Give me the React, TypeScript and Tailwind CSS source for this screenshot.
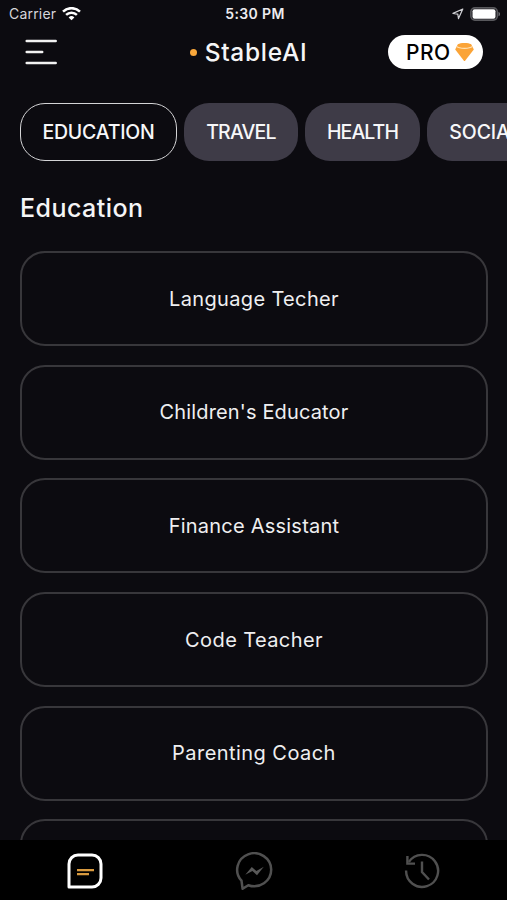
import { useState } from 'react';

interface Category {
  id: string;
  label: string;
  className: string;
}

interface Assistant {
  id: number;
  name: string;
  className: string;
}

const categories: Category[] = [
  { id: 'education', label: 'EDUCATION', className: 'w-[157px] tracking-[-0.2px]' },
  { id: 'travel', label: 'TRAVEL', className: 'w-[114px] tracking-[-0.8px]' },
  { id: 'health', label: 'HEALTH', className: 'w-[115px] tracking-[-0.9px]' },
  { id: 'social', label: 'SOCIAL', className: 'w-[116px] tracking-[-0.1px]' },
];

const assistants: Assistant[] = [
  { id: 1, name: 'Language Techer', className: 'tracking-[0.35px]' },
  { id: 2, name: "Children's Educator", className: 'tracking-[0.15px]' },
  { id: 3, name: 'Finance Assistant', className: 'tracking-[0.22px]' },
  { id: 4, name: 'Code Teacher', className: 'tracking-[0.4px]' },
  { id: 5, name: 'Parenting Coach', className: 'tracking-[0.45px]' },
  { id: 6, name: '', className: '' },
];

function StatusBar() {
  return (
    <div className="grid h-7 shrink-0 grid-cols-3 items-center pl-[9px] pr-[6px]">
      <div className="flex items-center gap-[6px]">
        <span className="text-[14px] leading-none tracking-[0.2px] text-[#d6d6da]">Carrier</span>
        <svg width="19" height="14" viewBox="0 0 19 14" fill="none" stroke="#fff" strokeWidth="2.5">
          <path d="M1 4.6a12.2 12.2 0 0 1 17 0" />
          <path d="M4.1 7.9a7.7 7.7 0 0 1 10.8 0" />
          <path d="M9.5 13.3 6.6 10.5a4.2 4.2 0 0 1 5.8 0z" fill="#fff" stroke="none" />
        </svg>
      </div>
      <span className="text-center text-[14px] font-semibold leading-none tracking-[0.35px] text-[#ececef]">5:30 PM</span>
      <div className="flex items-center justify-end gap-[7px]">
        <svg width="12" height="12" viewBox="0 0 12 12" fill="none" stroke="#d0d0d4" strokeWidth="1.2" strokeLinejoin="round" className="relative left-px">
          <path d="M10.8 1 1 5.4l4.8.7.7 4.5z" />
        </svg>
        <svg width="31" height="14" viewBox="0 0 31 14">
          <rect x="0.9" y="0.9" width="26.4" height="12.2" rx="4" fill="none" stroke="#58585c" strokeWidth="1.6" />
          <rect x="2.5" y="2.3" width="23" height="9.4" rx="2" fill="#fff" />
          <path d="M28.5 4.7c2 .8 2 3.8 0 4.6z" fill="#707074" />
        </svg>
      </div>
    </div>
  );
}

function Header() {
  return (
    <header className="grid h-12 shrink-0 grid-cols-3 items-center pl-[25px] pr-[24px]">
      <button type="button" aria-label="Menu" className="w-8">
        <svg width="32" height="26" viewBox="0 0 32 26" stroke="#f2f2f2" strokeWidth="2.5" strokeLinecap="round">
          <path d="M1.7 2h29M1.7 13h15.5M1.7 24h29" />
        </svg>
      </button>
      <div className="flex items-center justify-center gap-[8px] pr-[11px]">
        <span className="size-[7px] shrink-0 rounded-full bg-[#f9a73b]" />
        <h1 className="pt-px text-[24.5px] font-medium leading-none tracking-[0.7px] text-[#f5f5f6]">StableAI</h1>
      </div>
      <button type="button" className="flex h-[34px] w-[95px] items-center justify-self-end gap-[4px] rounded-full bg-white pl-[18px] text-black">
        <span className="pt-px text-[21px] font-medium leading-none tracking-[0.5px]">PRO</span>
        <svg width="19" height="20" viewBox="0 0 19 20" className="shrink-0">
          <path d="M2.8 2.3C6 .6 13 .6 16.2 2.3L18.8 7.6 9.9 18.9H9.1L.2 7.6z" fill="#fba437" />
          <ellipse cx="9.5" cy="3.5" rx="6.7" ry="2" fill="#fba437" />
          <path d="M1.6 4.4C4.5 7 14.5 7 17.4 4.4" fill="none" stroke="#ffe2b5" strokeWidth="1.1" />
        </svg>
      </button>
    </header>
  );
}

export default function App() {
  const [selected, setSelected] = useState('education');

  return (
    <div className="flex h-[900px] w-[507px] flex-col overflow-hidden bg-[#0c0b10] font-['Inter','Liberation_Sans',sans-serif]">
      <StatusBar />
      <Header />

      {/* Categories */}
      <div className="mt-[27px] flex shrink-0 gap-[7px] overflow-hidden pl-5">
        {categories.map((category) => (
          <button
            key={category.id}
            type="button"
            onClick={() => setSelected(category.id)}
            className={`h-[58px] shrink-0 rounded-[25px] pt-[2px] text-[19.5px] font-medium text-[#f7f7f9] ${category.className} ${
              selected === category.id ? 'border-[1.5px] border-[#d4d4d6]' : 'bg-[#3e3b47]'
            }`}
          >
            {category.label}
          </button>
        ))}
      </div>

      {/* Assistants */}
      <main className="flex min-h-0 flex-1 flex-col overflow-hidden px-5 pt-[31px]">
        <h2 className="h-[59px] shrink-0 text-[25px] font-medium leading-8 tracking-[0.45px] text-[#f5f5f6]">Education</h2>
        <div className="flex flex-col gap-[18.7px]">
          {assistants.map((assistant) => (
            <button
              key={assistant.id}
              type="button"
              className={`h-[95px] w-[468px] shrink-0 rounded-[25px] border-2 border-[#38373b] text-[20px] text-[#efeff0] ${assistant.className}`}
            >
              {assistant.name}
            </button>
          ))}
        </div>
      </main>

      {/* Bottom navigation */}
      <nav className="grid h-[60px] shrink-0 grid-cols-3 place-items-center bg-black pt-px">
        <button type="button" aria-label="Assistants">
          <svg width="36" height="36" viewBox="0 0 36 36" fill="none">
            <path d="M2 34V11a9 9 0 0 1 9-9h14a9 9 0 0 1 9 9v14a9 9 0 0 1-9 9z" stroke="#fff" strokeWidth="3" strokeLinejoin="round" />
            <path d="M10 17.2h17M10 21.2h12" stroke="#d99a3f" strokeWidth="2.2" />
          </svg>
        </button>
        <button type="button" aria-label="Chat">
          <svg width="40" height="38" viewBox="0 0 40 38" fill="none">
            <path d="M7.5 28.7A17 16.5 0 1 1 14.3 33.2L8.6 36.8z" stroke="#505050" strokeWidth="2.5" strokeLinejoin="round" />
            <path d="m11.3 22.8 6.5-7.8 4.6 4 7.4-4.2-6.8 8.4-4.6-4.2z" fill="#585858" />
          </svg>
        </button>
        <button type="button" aria-label="History" className="pr-[2px]">
          <svg width="36" height="36" viewBox="0 0 36 36" fill="none" stroke="#505050" strokeWidth="2.4">
            <path d="M2.1 17.5A16 16 0 1 0 4.8 9" />
            <path d="M3.4 3v7.6H11M18 8.5V19l7 7.5" />
          </svg>
        </button>
      </nav>
    </div>
  );
}
